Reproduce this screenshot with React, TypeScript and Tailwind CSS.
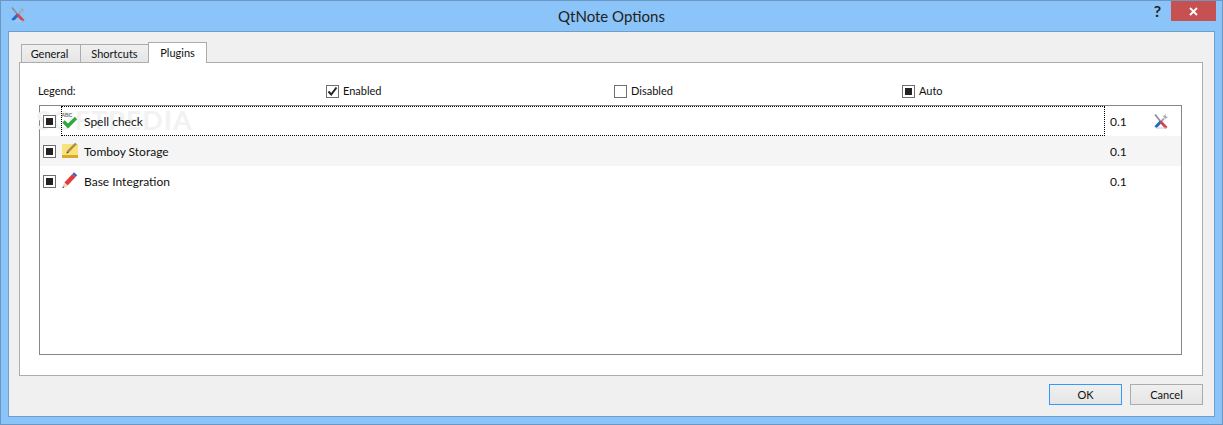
const font = { fontFamily: 'Lato, sans-serif' };

function Box({ children }: { children?: React.ReactNode }) {
  return (
    <span className="flex h-[13px] w-[13px] shrink-0 items-center justify-center border border-[#707070] bg-white">
      {children}
    </span>
  );
}

const AutoMark = () => <span className="block h-[7px] w-[7px] bg-[#222]" />;

function ToolsIcon({ size = 16 }: { size?: number }) {
  return (
    <svg width={size} height={size} viewBox="0 0 16 16">
      <path d="M2 1.5 L8 9" stroke="#8d9198" strokeWidth="1.8" />
      <path d="M13 1 L10 3.5 L12.5 6 L15.5 3.5 L14 4 L12.5 3 Z" fill="#a6a9af" />
      <path d="M11 5.5 L7 9.5" stroke="#a6a9af" strokeWidth="2" />
      <path d="M8 8.5 L2.5 14.2" stroke="#2468cc" strokeWidth="3" />
      <path d="M7.5 8.5 L13.5 15" stroke="#cf4a50" strokeWidth="2.8" />
      <path d="M3 15 H13" stroke="#c4c7cc" strokeWidth="1" />
    </svg>
  );
}

const SpellIcon = () => (
  <svg width="18" height="18" viewBox="0 0 18 18">
    <text x="0.5" y="5" fontSize="5" fontWeight="700" fill="#777" fontFamily="Liberation Sans, sans-serif">ABC</text>
    <path d="M2.5 9.5 L7 14 L15 6" fill="none" stroke="#2fa83c" strokeWidth="3.4" />
  </svg>
);

const NoteIcon = () => (
  <svg width="18" height="18" viewBox="0 0 18 18">
    <rect x="1" y="2" width="16" height="14" fill="#f8e27a" />
    <rect x="1" y="13" width="16" height="3" fill="#d9aa2c" />
    <path d="M6.5 10 L15 1.5" stroke="#a88a4a" strokeWidth="2.4" />
    <path d="M6.6 9.4 L5 11.6 L7.6 10.8" fill="#4b3a1a" />
  </svg>
);

const PencilIcon = () => (
  <svg width="18" height="18" viewBox="0 0 18 18">
    <path d="M5 12 L13 3.5" stroke="#e23b3f" strokeWidth="4.4" />
    <path d="M13 3.5 L14.6 1.8" stroke="#3c62c4" strokeWidth="4.4" />
    <path d="M2.8 11 L1.5 16 L6.4 14.4 Z" fill="#ecd3a8" />
    <path d="M2 14.2 L1.5 16 L3.4 15.4 Z" fill="#333" />
  </svg>
);

type Plugin = { name: string; icon: React.ReactNode; focused?: boolean; shaded?: boolean; tools?: boolean };

const plugins: Plugin[] = [
  { name: 'Spell check', icon: <SpellIcon />, focused: true, tools: true },
  { name: 'Tomboy Storage', icon: <NoteIcon />, shaded: true },
  { name: 'Base Integration', icon: <PencilIcon /> },
];

const legend = [
  { label: 'Enabled', mark: <svg width="11" height="11" viewBox="0 0 11 11"><path d="M1.5 5.5 L4.2 8.5 L9.5 1.5" fill="none" stroke="#222" strokeWidth="2" /></svg> },
  { label: 'Disabled', mark: null },
  { label: 'Auto', mark: <AutoMark /> },
];

export default function App() {
  return (
    <div style={font} className="flex h-[425px] w-[1223px] flex-col border border-[#6b97c2] bg-[#8ac4f8] text-[11px] text-[#111]">
      {/* title bar */}
      <div className="relative flex h-[30px] shrink-0 items-start">
        <span className="ml-[9px] mt-[5px]"><ToolsIcon /></span>
        <span className="absolute left-0 right-0 top-[5px] text-center text-[15px] leading-[20px] text-[#222]">QtNote Options</span>
        <span className="ml-auto mr-[10px] text-[16px] font-bold leading-[20px] text-[#222]">?</span>
        <span className="mr-[6px] flex h-[20px] w-[45px] items-center justify-center bg-[#c75050]">
          <svg width="9" height="9" viewBox="0 0 9 9"><path d="M1 1 L8 8 M8 1 L1 8" stroke="#fff" strokeWidth="1.8" /></svg>
        </span>
      </div>

      {/* client area */}
      <div className="mx-[7px] flex min-h-0 flex-1 flex-col border border-[#6f9fcb] bg-[#f0f0f0] pl-[10px] pr-[11px] pt-[9px]">
        <div className="flex h-[21px] items-end pl-[2px]">
          <div className="flex h-[18px] w-[60px] items-center justify-center border border-b-0 border-[#acacac] bg-gradient-to-b from-[#f0f0f0] to-[#e5e5e5] pr-[3px] pt-[2px]">General</div>
          <div className="ml-[-1px] flex h-[18px] w-[69px] items-center justify-center border border-b-0 border-[#acacac] bg-gradient-to-b from-[#f0f0f0] to-[#e5e5e5] pt-[2px]">Shortcuts</div>
          <div className="relative z-10 mb-[-1px] ml-[-1px] flex h-[21px] w-[59px] items-center justify-center border border-b-0 border-[#acacac] bg-white">Plugins</div>
        </div>

        <div className="flex h-[314px] flex-col border border-[#acacac] bg-white pl-[19px] pr-[20px] pt-[20px]">
          <div className="grid h-[15px] grid-cols-[288px_288px_288px_1fr] items-center">
            <span className="ml-[-1px]">Legend:</span>
            {legend.map((l) => (
              <span key={l.label} className="ml-[-1px] flex items-center gap-[4px]">
                <Box>{l.mark}</Box>
                <span>{l.label}</span>
              </span>
            ))}
          </div>

          <div className="relative mt-[7px] h-[250px] border border-[#828790] bg-white text-[12px]">
            <span className="pointer-events-none absolute left-[-4px] top-[-1px] select-none text-[27px] font-bold leading-[30px] tracking-[1px] text-[#f2f2f2]">SOFTPEDIA</span>
            {plugins.map((p) => (
              <div key={p.name} className={`relative flex h-[30px] items-center ${p.shaded ? 'bg-[#f5f5f5]' : ''}`}>
                <span className="ml-[3px] mr-[5px] mt-[1px]"><Box><AutoMark /></Box></span>
                <div className={`flex h-full w-[1044px] items-center gap-[5px] border border-dotted ${p.focused ? 'border-black' : 'border-transparent'}`}>
                  <span className="ml-[-1px] block">{p.icon}</span>
                  <span className="mt-[1px]">{p.name}</span>
                </div>
                <span className="ml-[5px] mt-[1px] w-[43px]">0.1</span>
                {p.tools && <ToolsIcon />}
              </div>
            ))}
          </div>
        </div>

        <div className="flex flex-1 items-start justify-end gap-[8px] pt-[8px]">
          <button className="h-[21px] w-[73px] border border-[#3399ff] bg-gradient-to-b from-[#f0f0f0] to-[#e5e5e5] pt-[2px]">OK</button>
          <button className="h-[21px] w-[73px] border border-[#acacac] bg-gradient-to-b from-[#f0f0f0] to-[#e5e5e5] pt-[2px]">Cancel</button>
        </div>
      </div>
      <div className="h-[7px] shrink-0" />
    </div>
  );
}
